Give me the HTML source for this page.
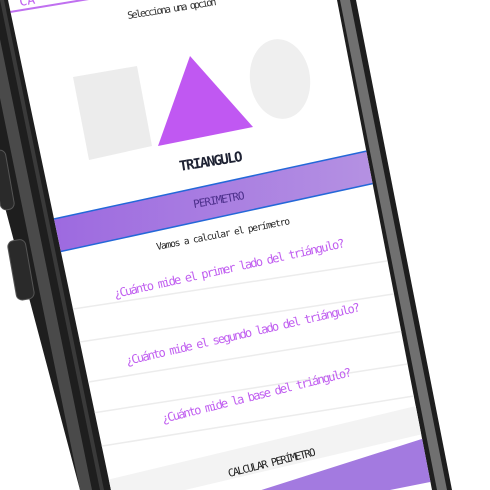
<!DOCTYPE html>
<html><head><meta charset="utf-8"><style>
html,body{margin:0;padding:0;background:#fff;width:490px;height:490px;overflow:hidden}
svg{display:block;position:absolute;left:0;top:0}
text{font-family:"DejaVu Sans Mono","Liberation Mono",monospace}
</style></head><body>
<svg width="490" height="490" viewBox="0 0 490 490" xmlns="http://www.w3.org/2000/svg" overflow="hidden">
<defs>
<linearGradient id="band" x1="0" y1="0" x2="1" y2="0">
<stop offset="0" stop-color="#9c68e0"/><stop offset="1" stop-color="#b592e2"/>
</linearGradient>
<clipPath id="all"><rect x="0" y="0" width="490" height="490"/></clipPath>
</defs>
<g clip-path="url(#all)">
<polygon points="-50,0 356,0 452,490 80,490" fill="#1e1e1e"/>
<polygon points="-20,0 -8,0 92,490 80,490" fill="#4a4a4a"/>
<polygon points="0,0 4,0 104,490 100,490" fill="#3a3a3a"/>
<polygon points="340,0 350,0 447,490 437,490" fill="#707070"/>
<rect x="-4" y="150" width="14" height="60" rx="6" fill="#2a2a2a" stroke="#555" stroke-width="1" transform="rotate(-10 3 180)"/>
<rect x="12" y="240" width="18" height="60" rx="6" fill="#2a2a2a" stroke="#555" stroke-width="1" transform="rotate(-10 20 270)"/>
<polygon points="8,0 337,0 432,490 111,490" fill="#fff"/>
<clipPath id="scr"><polygon points="8,0 337,0 432,490 111,490"/></clipPath>
<g clip-path="url(#scr)">
<line x1="10" y1="12" x2="95" y2="-2" stroke="#c070f0" stroke-width="2"/>
<text x="20" y="6" font-size="13" fill="#c060f0" transform="rotate(-9 20 6)">CA</text>
<text x="128" y="19" font-size="10" fill="#333" textLength="90" transform="rotate(-9 128 19)">Selecciona una opción</text>
<polygon points="73,77 137,66 152,146 89,160" fill="#ececec"/>
<polygon points="190,56 253,127 158,146" fill="#c058f2"/>
<ellipse cx="280" cy="79" rx="30" ry="40" fill="#efefef" transform="rotate(-8 280 79)"/>
<text x="180" y="171" font-size="14" font-weight="bold" fill="#1e2233" textLength="64" transform="rotate(-9 180 171)">TRIANGULO</text>
<polygon points="40,222 367,151 380,182 40,256" fill="url(#band)"/>
<line x1="40" y1="222" x2="367" y2="151" stroke="#2468d8" stroke-width="1.5"/>
<line x1="40" y1="256" x2="380" y2="182" stroke="#2468d8" stroke-width="1.5"/>
<text x="194" y="208" font-size="11" fill="#4b2e8a" textLength="52" transform="rotate(-10 194 208)">PERIMETRO</text>
<text x="157" y="250" font-size="9.5" fill="#222" textLength="136" transform="rotate(-11 157 250)">Vamos a calcular el perímetro</text>
<g stroke="#ececec" stroke-width="1.5">
<line x1="60" y1="311" x2="400" y2="259"/>
<line x1="60" y1="345" x2="400" y2="293"/>
<line x1="70" y1="385" x2="410" y2="330"/>
<line x1="80" y1="415" x2="420" y2="362"/>
<line x1="90" y1="448" x2="420" y2="395"/>
</g>
<text x="115" y="298" font-size="12" fill="#c05ef0" textLength="236" transform="rotate(-12.5 115 298)">¿Cuánto mide el primer lado del triángulo?</text>
<text x="127" y="365" font-size="12" fill="#c05ef0" textLength="240" transform="rotate(-13 127 365)">¿Cuánto mide el segundo lado del triángulo?</text>
<text x="163" y="423" font-size="12" fill="#c05ef0" textLength="195" transform="rotate(-14 163 423)">¿Cuánto mide la base del triángulo?</text>
<polygon points="90,484 420,405 440,430 100,510" fill="#f3f3f3"/>
<text x="229" y="477" font-size="10.5" fill="#222" textLength="90" transform="rotate(-14 229 477)">CALCULAR PERÍMETRO</text>
<polygon points="230,500 428,437 440,480 240,520" fill="#a37ae0"/>
</g>
</g>
</svg>
</body></html>
